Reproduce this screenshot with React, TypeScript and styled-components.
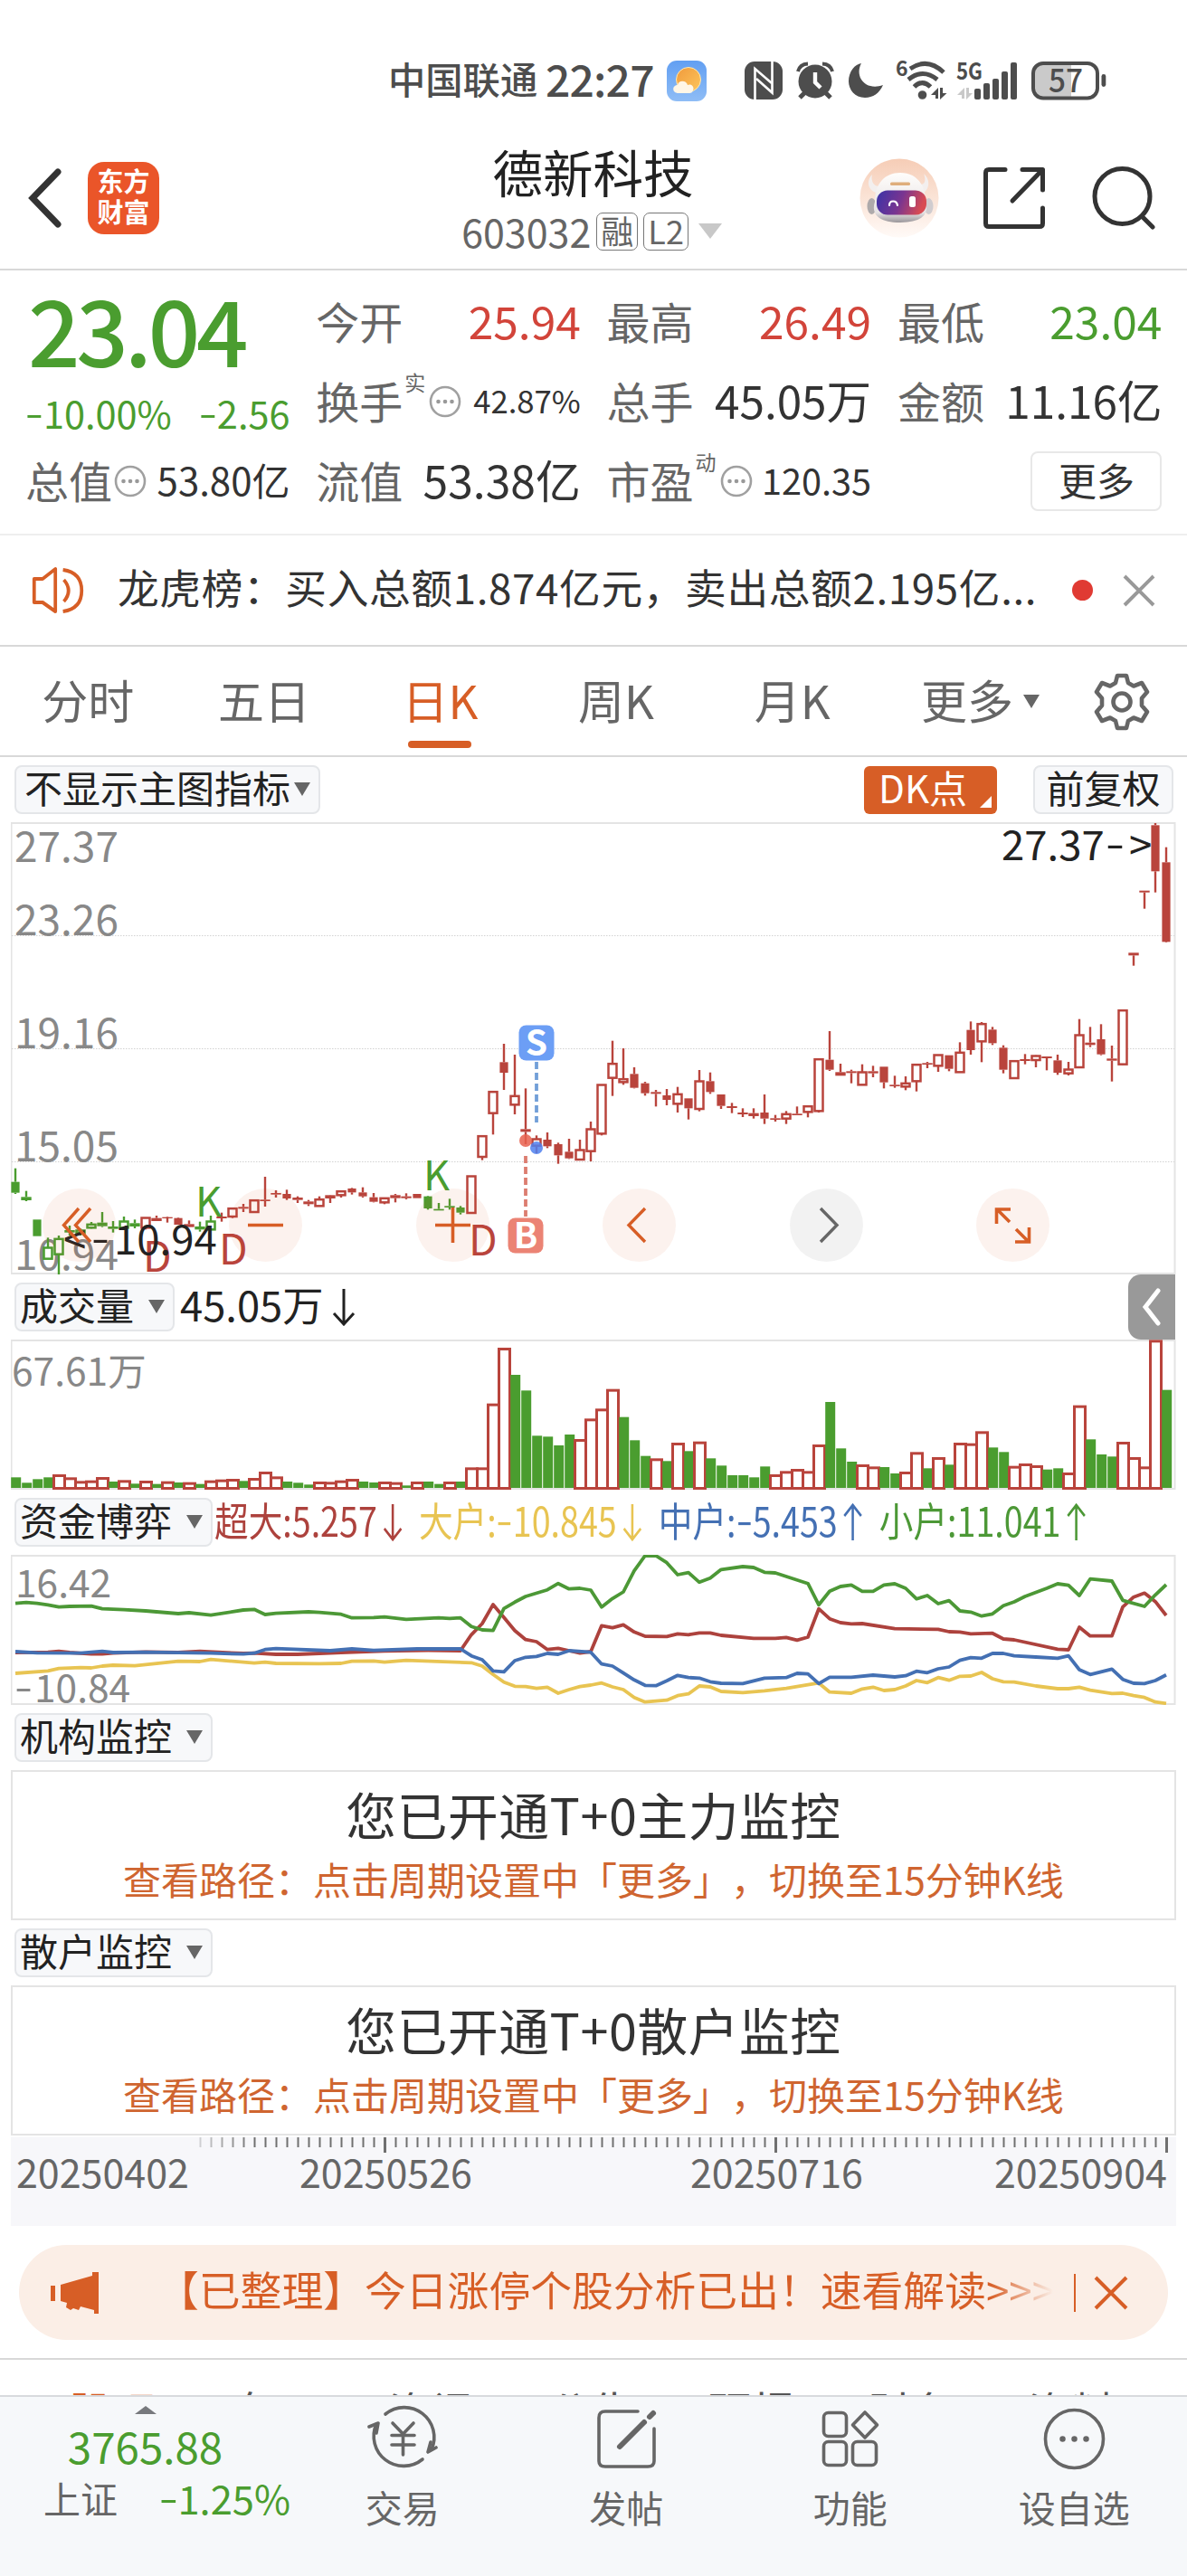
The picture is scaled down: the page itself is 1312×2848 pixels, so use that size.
import React from "react";
import styled, { createGlobalStyle } from "styled-components";

type Kind = "r" | "R" | "g" | "G";

// [wick top, body top, body bottom, wick bottom, kind]
// lower case kinds are filled, upper case kinds are hollow
type Candle = [number, number, number, number, Kind];
type Point = [number, number];

const RED = "#b9443c";
const GREEN = "#4a9d2f";
const BLUE = "#4470b3";
const YELLOW = "#e8c452";
const ORANGE = "#d75e26";

const FONT = '"Noto Sans CJK SC", "Noto Sans", sans-serif';

const candles: Candle[] = [
  [1175, 1220, 1256, 1260, "g"],
  [1250, 1270, 1281, 1284, "g"],
  [1345, 1345, 1400, 1400, "g"],
  [1405, 1437, 1475, 1475, "G"],
  [1398, 1408, 1460, 1527, "G"],
  [1365, 1380, 1388, 1398, "g"],
  [1375, 1380, 1390, 1398, "G"],
  [1353, 1360, 1372, 1375, "G"],
  [1320, 1355, 1367, 1370, "g"],
  [1350, 1368, 1376, 1388, "g"],
  [1335, 1350, 1372, 1378, "G"],
  [1345, 1357, 1368, 1374, "g"],
  [1338, 1338, 1372, 1378, "R"],
  [1332, 1340, 1350, 1350, "r"],
  [1335, 1337, 1341, 1355, "r"],
  [1338, 1340, 1362, 1362, "r"],
  [1348, 1360, 1370, 1370, "r"],
  [1352, 1368, 1378, 1385, "g"],
  [1332, 1350, 1378, 1380, "G"],
  [1322, 1335, 1341, 1352, "r"],
  [1307, 1307, 1335, 1340, "R"],
  [1293, 1303, 1309, 1320, "r"],
  [1280, 1280, 1320, 1320, "R"],
  [1203, 1279, 1284, 1302, "r"],
  [1248, 1257, 1262, 1272, "r"],
  [1246, 1260, 1275, 1280, "r"],
  [1268, 1272, 1280, 1290, "r"],
  [1280, 1285, 1294, 1300, "r"],
  [1268, 1277, 1300, 1300, "R"],
  [1263, 1264, 1275, 1290, "r"],
  [1248, 1250, 1264, 1272, "R"],
  [1240, 1242, 1255, 1262, "r"],
  [1238, 1255, 1268, 1272, "r"],
  [1257, 1271, 1286, 1288, "r"],
  [1272, 1273, 1288, 1294, "R"],
  [1260, 1264, 1274, 1288, "r"],
  [1258, 1268, 1274, 1278, "r"],
  [1260, 1260, 1274, 1274, "r"],
  [1266, 1268, 1308, 1312, "g"],
  [1290, 1310, 1315, 1315, "g"],
  [1276, 1300, 1305, 1312, "g"],
  [1300, 1305, 1322, 1328, "g"],
  [1200, 1200, 1323, 1325, "R"],
  [1067, 1067, 1137, 1148, "R"],
  [920, 920, 992, 1063, "R"],
  [762, 823, 858, 915, "r"],
  [798, 934, 964, 996, "R"],
  [910, 1045, 1054, 1095, "r"],
  [1066, 1077, 1100, 1125, "R"],
  [1056, 1080, 1102, 1108, "r"],
  [1090, 1095, 1132, 1160, "r"],
  [1077, 1120, 1142, 1144, "r"],
  [1080, 1113, 1146, 1148, "R"],
  [1020, 1044, 1118, 1152, "R"],
  [897, 897, 1060, 1066, "R"],
  [752, 827, 875, 935, "R"],
  [777, 878, 889, 898, "R"],
  [840, 862, 908, 910, "r"],
  [888, 893, 926, 934, "r"],
  [915, 922, 928, 970, "r"],
  [912, 933, 948, 966, "r"],
  [905, 928, 961, 990, "R"],
  [943, 943, 976, 1013, "r"],
  [849, 885, 978, 986, "R"],
  [857, 886, 922, 928, "r"],
  [930, 930, 968, 978, "r"],
  [958, 969, 975, 992, "r"],
  [976, 990, 996, 1005, "r"],
  [976, 992, 1002, 1010, "r"],
  [930, 990, 1010, 1028, "r"],
  [998, 1009, 1014, 1020, "r"],
  [985, 994, 1010, 1028, "R"],
  [970, 994, 999, 999, "r"],
  [968, 968, 988, 1006, "R"],
  [812, 812, 985, 990, "R"],
  [720, 815, 848, 852, "r"],
  [828, 856, 868, 868, "r"],
  [848, 853, 859, 893, "r"],
  [830, 855, 898, 898, "R"],
  [835, 853, 860, 873, "r"],
  [838, 838, 890, 910, "r"],
  [868, 898, 903, 908, "r"],
  [870, 892, 904, 916, "R"],
  [828, 830, 886, 920, "R"],
  [822, 826, 831, 843, "r"],
  [798, 798, 835, 855, "R"],
  [800, 800, 845, 853, "r"],
  [757, 790, 856, 856, "R"],
  [688, 716, 783, 798, "r"],
  [690, 695, 754, 823, "R"],
  [706, 715, 760, 766, "r"],
  [767, 775, 848, 860, "r"],
  [818, 818, 876, 876, "R"],
  [796, 813, 819, 830, "r"],
  [800, 801, 816, 840, "R"],
  [804, 804, 810, 850, "r"],
  [798, 817, 858, 865, "r"],
  [822, 846, 860, 867, "R"],
  [680, 732, 840, 840, "R"],
  [706, 758, 766, 773, "r"],
  [697, 747, 797, 800, "r"],
  [768, 811, 818, 887, "r"],
  [650, 650, 830, 832, "R"],
  [460, 460, 469, 503, "r"],
  [254, 254, 260, 314, "r"],
  [30, 37, 190, 260, "r"],
  [110, 160, 424, 426, "r"],
];

const volumes =
  "700g 718g 706g 700g 693R 703R 715R 713R 702R 714g 712R 721g 714R 722g 716R 717g 719R 722g 713R 710R 708R 712g 705R 684R 700R 714g 718g 724g 717R 718R 713R 708R 714g 717g 717R 719R 727g 717R 714g 722g 717R 714g 670R 670R 458R 273R 360g 412g 562g 565g 594g 558g 576R 508R 475R 410R 500g 577g 629g 640R 646g 588R 613g 584R 637g 661g 693g 693g 700g 664g 693R 682R 675R 682R 594R 450g 604g 648g 660R 667R 666g 687g 684R 619R 670g 636R 658g 588R 590R 550R 601g 616g 665R 657R 663R 674g 670g 687R 464R 574g 624g 631g 585R 636R 667R 247R 410g"
    .split(" ")
    .map((v) => ({ top: parseInt(v, 10), up: v.endsWith("R") }));

const smallLine: Point[] = [
  [0, 1118], [1, 1115], [2, 1118], [3, 1123], [4, 1130], [5, 1128], [7, 1127], [8, 1136], [10, 1139],
  [12, 1143], [15, 1152], [16, 1149], [18, 1157], [21, 1140], [22, 1138], [23, 1155], [24, 1151],
  [27, 1146], [28, 1148], [30, 1154], [31, 1166], [33, 1165], [34, 1163], [36, 1171], [39, 1166],
  [40, 1168], [41, 1166], [42, 1195], [43, 1206], [44, 1208], [45, 1135], [46, 1114], [47, 1095],
  [49, 1073], [50, 1052], [51, 1070], [52, 1068], [53, 1074], [54, 1130], [55, 1102], [56, 1080],
  [57, 1010], [58, 960], [59, 960], [60, 983], [61, 1023], [62, 1016], [63, 1048], [64, 1034],
  [65, 1006], [67, 996], [68, 999], [69, 1015], [70, 1017], [73, 1052], [74, 1123], [75, 1078],
  [76, 1062], [77, 1057], [78, 1078], [79, 1078], [80, 1057], [81, 1053], [82, 1068], [83, 1103],
  [84, 1092], [85, 1119], [86, 1109], [87, 1143], [88, 1147], [89, 1160], [90, 1153], [91, 1126],
  [92, 1113], [93, 1095], [95, 1068], [96, 1053], [97, 1058], [98, 1092], [99, 1037], [101, 1044],
  [102, 1108], [104, 1128], [105, 1090], [106, 1056],
];

const superLine: Point[] = [
  [0, 1281], [3, 1280], [4, 1277], [5, 1281], [7, 1286], [8, 1286], [9, 1283], [12, 1279], [15, 1281],
  [17, 1277], [21, 1284], [22, 1283], [24, 1287], [26, 1287], [30, 1281], [34, 1276], [38, 1274],
  [41, 1275], [42, 1222], [43, 1185], [44, 1122], [45, 1165], [46, 1208], [47, 1238], [48, 1245],
  [49, 1271], [50, 1267], [51, 1275], [52, 1283], [53, 1278], [54, 1192], [55, 1199], [56, 1189],
  [57, 1213], [58, 1227], [60, 1228], [61, 1219], [62, 1222], [63, 1216], [64, 1216], [65, 1224],
  [68, 1234], [70, 1234], [71, 1231], [72, 1240], [73, 1230], [74, 1136], [75, 1169], [76, 1182],
  [77, 1186], [78, 1185], [81, 1202], [85, 1204], [86, 1212], [87, 1213], [88, 1219], [90, 1217],
  [91, 1236], [92, 1239], [96, 1270], [97, 1272], [98, 1197], [99, 1226], [101, 1226], [102, 1130],
  [103, 1097], [104, 1084], [105, 1112], [106, 1158],
];

const middleLine: Point[] = [
  [0, 1278], [2, 1282], [6, 1283], [8, 1277], [9, 1281], [12, 1280], [18, 1283], [21, 1286], [22, 1283],
  [23, 1271], [24, 1268], [29, 1275], [31, 1269], [33, 1274], [37, 1269], [41, 1269], [42, 1292],
  [43, 1305], [44, 1342], [45, 1345], [46, 1308], [47, 1297], [48, 1294], [49, 1284], [50, 1287],
  [51, 1275], [53, 1280], [54, 1319], [55, 1326], [56, 1349], [57, 1372], [58, 1390], [59, 1391],
  [60, 1375], [61, 1357], [62, 1364], [63, 1366], [64, 1378], [65, 1383], [67, 1384], [69, 1366],
  [71, 1364], [72, 1350], [73, 1352], [74, 1384], [75, 1363], [77, 1363], [79, 1356], [81, 1362],
  [82, 1358], [83, 1343], [84, 1348], [85, 1335], [86, 1329], [87, 1307], [88, 1298], [89, 1300],
  [90, 1284], [91, 1284], [92, 1292], [94, 1296], [96, 1300], [97, 1292], [98, 1338], [99, 1354],
  [101, 1336], [102, 1370], [103, 1383], [104, 1384], [105, 1374], [106, 1355],
];

const bigLine: Point[] = [
  [0, 1350], [3, 1342], [4, 1334], [6, 1331], [7, 1332], [8, 1326], [9, 1323], [11, 1325], [15, 1310],
  [17, 1311], [18, 1304], [22, 1316], [23, 1313], [24, 1317], [28, 1318], [30, 1317], [31, 1310],
  [33, 1309], [34, 1313], [36, 1307], [42, 1315], [43, 1326], [44, 1354], [45, 1379], [46, 1393],
  [47, 1394], [48, 1400], [49, 1396], [50, 1416], [51, 1404], [52, 1394], [53, 1389], [54, 1382],
  [55, 1395], [56, 1404], [57, 1430], [58, 1445], [60, 1439], [61, 1424], [62, 1418], [63, 1392],
  [64, 1395], [65, 1410], [67, 1414], [69, 1408], [71, 1400], [73, 1388], [74, 1382], [75, 1412],
  [77, 1416], [78, 1402], [79, 1396], [80, 1407], [81, 1404], [82, 1392], [83, 1374], [84, 1381],
  [85, 1364], [86, 1373], [87, 1360], [88, 1359], [89, 1347], [90, 1368], [91, 1378], [92, 1379],
  [94, 1392], [96, 1401], [97, 1401], [98, 1396], [99, 1406], [101, 1417], [102, 1416], [103, 1424],
  [104, 1430], [105, 1445], [106, 1450],
];

// every chart shares the same day axis
const dayX = (i: number) => 17 + i * 12;
// chart values are stored in thirds of a pixel from the chart's origin
const valueY = (v: number, origin: number) => origin + v / 3;

const linePoints = (line: Point[]) =>
  line.map(([i, v]) => `${dayX(i)},${valueY(v, 1400).toFixed(1)}`).join(" ");

function StatusIcons() {
  return (
    <svg width="404" height="48" viewBox="820 65 404 48">
      <rect x="823" y="68" width="42" height="42" rx="11" fill="#4d4d4d" />
      <path d="M834.500 110V76L853 92" fill="none" stroke="#fff" strokeWidth="2.600" />
      <path d="M853.500 68V102.500L836 87" fill="none" stroke="#fff" strokeWidth="2.600" />
      <circle cx="901" cy="90" r="18.500" fill="#4d4d4d" />
      <path d="M882 79Q884 71 893 70.500M909 70.500Q918 71 920 79" fill="none" stroke="#4d4d4d" strokeWidth="4" />
      <path d="M890 102L884 108M912 102L918 108" stroke="#4d4d4d" strokeWidth="5" />
      <path d="M901 80V91L907 97" fill="none" stroke="#fff" strokeWidth="4.400" />
      <path d="M952 70C944 85 957 101 976 94C972 103 965 108 956 108C945 108 938 99 938 90C938 79 945 71 952 70Z" fill="#4d4d4d" />
      <text x="990" y="84" fontFamily={FONT} fontWeight="700" fontSize="23" fill="#4d4d4d">6</text>
      <g fill="none" stroke="#4d4d4d" strokeWidth="5">
        <path d="M1006 76Q1025 63 1043 80" />
        <path d="M1004 88Q1020 75 1036 88" />
        <path d="M1010.500 96Q1019.500 87 1028.500 96" />
      </g>
      <circle cx="1019.500" cy="105" r="4.800" fill="#4d4d4d" />
      <path d="M1029 105L1037 97V109H1034V105ZM1039 97H1042V103H1046.500L1039 110Z" fill="#4d4d4d" />
      <text x="1057" y="88" fontFamily={FONT} fontWeight="700" fontSize="26" textLength="29" lengthAdjust="spacingAndGlyphs" fill="#4d4d4d">5G</text>
      <path d="M1058 105L1066 97V109H1063V105ZM1068 97H1071V103H1075L1068 110Z" fill="#c9c9c9" />
      <g fill="#4d4d4d">
        <rect x="1077" y="98" width="7" height="12" rx="2" />
        <rect x="1087" y="92" width="7" height="18" rx="2" />
        <rect x="1097" y="87" width="7" height="23" rx="2" />
        <rect x="1107" y="79" width="7" height="31" rx="2" />
        <rect x="1117" y="69" width="7" height="41" rx="2" />
      </g>
      <path d="M1154 70H1184V108H1154Q1142 108 1142 97V81Q1142 70 1154 70Z" fill="#cacaca" />
      <rect x="1142" y="70" width="71" height="38.500" rx="11" fill="none" stroke="#4d4d4d" strokeWidth="4" />
      <rect x="1217.500" y="82" width="4.800" height="14" rx="2.400" fill="#4d4d4d" />
      <text x="1178" y="102" textAnchor="middle" fontFamily={FONT} fontWeight="500" fontSize="36" textLength="38" lengthAdjust="spacingAndGlyphs" fill="#4d4d4d">57</text>
    </svg>
  );
}

function WeatherIcon() {
  return (
    <svg width="44" height="45" viewBox="0 0 44 45">
      <defs>
        <linearGradient id="sky" x1="0" y1="0" x2="0" y2="1">
          <stop offset="0" stopColor="#629ff2" />
          <stop offset="1" stopColor="#8fbdf6" />
        </linearGradient>
        <linearGradient id="sun" x1="0" y1="0" x2="1" y2="1">
          <stop offset="0" stopColor="#f09a3c" />
          <stop offset="1" stopColor="#fdc65c" />
        </linearGradient>
      </defs>
      <rect width="44" height="45" rx="11" fill="url(#sky)" />
      <circle cx="24" cy="21" r="13.500" fill="url(#sun)" stroke="#ffe9b0" strokeWidth="1" />
      <path d="M13 36C5 36 6 27 12 27C13 21 22 22 23 27C27 25 31 29 29 33C28 36 26 36 24 36Z" fill="#fff6e6" />
    </svg>
  );
}

function RobotIcon() {
  return (
    <svg width="88" height="88" viewBox="0 0 88 88">
      <defs>
        <linearGradient id="halo" x1="0" y1="0" x2="0" y2="1">
          <stop offset="0" stopColor="#f6cdb6" />
          <stop offset="1" stopColor="#fffaf7" />
        </linearGradient>
        <linearGradient id="visor" x1="0" y1="0" x2="1" y2="0.200">
          <stop offset="0" stopColor="#3a33a8" />
          <stop offset="0.550" stopColor="#7a3590" />
          <stop offset="1" stopColor="#d84b53" />
        </linearGradient>
        <linearGradient id="shell" x1="0" y1="0" x2="0" y2="1">
          <stop offset="0" stopColor="#fffdfb" />
          <stop offset="0.800" stopColor="#e6e3e4" />
          <stop offset="1" stopColor="#9a969a" />
        </linearGradient>
      </defs>
      <circle cx="44" cy="44" r="43.500" fill="url(#halo)" />
      <ellipse cx="13.500" cy="53" rx="5" ry="9" fill="#aeaaab" />
      <ellipse cx="76.500" cy="53" rx="5" ry="9" fill="#d0cccf" />
      <path d="M23 30C17 33 12 26 14 18C8 24 8 34 18 38ZM66 28C72 31 74 24 71 17C78 23 78 33 71 38Z" fill="#f3efee" />
      <path d="M17 48C17 28 28 16 45 16C62 16 73 28 73 48C77 60 71 71 45 71C19 71 13 60 17 48Z" fill="url(#shell)" />
      <rect x="34" y="26.500" width="22" height="3.500" rx="1.500" fill="#dfae7c" />
      <rect x="19" y="35.500" width="55" height="27" rx="12" fill="url(#visor)" />
      <path d="M33 52C33 46 41 46 42 52" fill="none" stroke="#fff" strokeWidth="2.200" strokeLinecap="round" />
      <rect x="55" y="42" width="7" height="12" rx="2.500" fill="#fff" />
    </svg>
  );
}

function DotsIcon() {
  return (
    <svg width="36" height="36" viewBox="0 0 36 36">
      <circle cx="18" cy="18" r="16" fill="none" stroke="#a0a0a0" strokeWidth="2.600" />
      <g fill="#999">
        <circle cx="10.500" cy="18" r="2.300" />
        <circle cx="18" cy="18" r="2.300" />
        <circle cx="25.500" cy="18" r="2.300" />
      </g>
    </svg>
  );
}

function ArrowIcon({ up }: { up?: boolean }) {
  return (
    <svg width="30" height="42" viewBox="0 0 30 42">
      <path
        d={up ? "M15 41V3M4 14L15 2L26 14" : "M15 1V39M4 28L15 40L26 28"}
        fill="none"
        stroke="currentColor"
        strokeWidth="3"
      />
    </svg>
  );
}

function Selector({ text, tight }: { text: string; tight?: boolean }) {
  return (
    <Pill $tight={tight}>
      {text}
      <Triangle />
    </Pill>
  );
}

function PriceChart() {
  return (
    <ChartSvg width="1288" height="500" viewBox="12 909 1288 500">
      <rect x="12.500" y="910" width="1286" height="498" fill="none" stroke="#e4e4e4" strokeWidth="2" />
      {[1034.5, 1159.5, 1284.5].map((y) => (
        <line key={y} x1="13" x2="1298" y1={y} y2={y} stroke="#d2d2d2" strokeDasharray="1.500 1.500" />
      ))}
      <g fontSize="46" fill="#888">
        <text x="16" y="953">27.37</text>
        <text x="16" y="1034">23.26</text>
        <text x="16" y="1159">19.16</text>
        <text x="16" y="1283.500">15.05</text>
        <text x="16" y="1404">10.94</text>
      </g>
      {candles.map(([high, top, bottom, low, kind], i) => {
        const color = kind.toLowerCase() === "g" ? GREEN : RED;
        const hollow = kind === "R" || kind === "G";
        const x = dayX(i);
        const thin = bottom - top < 13;
        const half = thin ? 5.7 : 4.6;
        return (
          <g key={i}>
            <line x1={x} x2={x} y1={valueY(high, 900)} y2={valueY(top, 900)} stroke={color} strokeWidth="2.400" />
            <line x1={x} x2={x} y1={valueY(bottom, 900)} y2={valueY(low, 900)} stroke={color} strokeWidth="2.400" />
            {hollow ? (
              <rect x={x - 4.5} y={valueY(top, 900) + 0.5} width="9" height={(bottom - top) / 3 - 0.5} fill="#fff" stroke={color} strokeWidth="2.500" />
            ) : (
              <rect x={x - half} y={valueY(top, 900)} width={half * 2} height={(bottom - top) / 3} fill={color} />
            )}
          </g>
        );
      })}
      <line x1="593" x2="593" y1="1174" y2="1241" stroke="#729fd8" strokeWidth="3.800" strokeDasharray="8 4" />
      <line x1="581" x2="581" y1="1278" y2="1345" stroke="#dc7d70" strokeWidth="3.800" strokeDasharray="8 4" />
      <circle cx="581" cy="1261" r="7" fill="#e8604e" fillOpacity="0.850" />
      <circle cx="593" cy="1269" r="7" fill="#4f80ee" fillOpacity="0.850" />
      <rect x="573.500" y="1133.500" width="39" height="39" rx="8" fill="#6c9ef5" />
      <rect x="561.500" y="1346.500" width="39" height="39" rx="8" fill="#eb8374" />
      <g fontSize="39" fontWeight="700" textAnchor="middle" fill="#fff">
        <text x="593" y="1167">S</text>
        <text x="581" y="1380">B</text>
      </g>
      <g fontSize="45" fill={GREEN}>
        <text x="216" y="1345">K</text>
        <text x="468" y="1316">K</text>
      </g>
      <g fontSize="46" fill={RED}>
        <text x="158" y="1405.500">D</text>
        <text x="242" y="1397.500">D</text>
        <text x="518" y="1388">D</text>
      </g>
      <g fontSize="45.500" fill="#222">
        <text x="70" y="1387">&lt;</text>
        <text x="101" y="1385" textLength="20" lengthAdjust="spacingAndGlyphs">-</text>
        <text x="126" y="1387">10.94</text>
        <text x="1107" y="951">27.37</text>
        <text x="1222" y="949" textLength="21" lengthAdjust="spacingAndGlyphs">-</text>
        <text x="1248" y="951">&gt;</text>
      </g>
    </ChartSvg>
  );
}

function VolumeChart() {
  return (
    <ChartSvg width="1288" height="166" viewBox="12 1481 1288 166">
      <rect x="12.500" y="1482" width="1286" height="164" fill="none" stroke="#e4e4e4" strokeWidth="2" />
      <text x="13" y="1531.500" fontSize="42.500" fill="#888">67.61万</text>
      {volumes.map(({ top, up }, i) =>
        up ? (
          <rect key={i} x={dayX(i) - 5.5} y={valueY(top, 1400) + 0.5} width="12" height={(735 - top) / 3} fill="#fff" stroke={RED} strokeWidth="3" />
        ) : (
          <rect key={i} x={dayX(i) - 4.8} y={valueY(top, 1400)} width="11" height={(735 - top) / 3} fill={GREEN} />
        )
      )}
    </ChartSvg>
  );
}

function FundsChart() {
  return (
    <ChartSvg width="1288" height="166" viewBox="12 1719 1288 166">
      <rect x="12.500" y="1720" width="1286" height="164" fill="none" stroke="#e4e4e4" strokeWidth="2" />
      <g fontSize="42.500" fill="#888">
        <text x="17" y="1765.500">16.42</text>
        <text x="16" y="1880" textLength="20" lengthAdjust="spacingAndGlyphs">-</text>
        <text x="38" y="1881.500">10.84</text>
      </g>
      <g fill="none" strokeWidth="3.800" strokeLinejoin="round">
        <polyline points={linePoints(bigLine)} stroke={YELLOW} />
        <polyline points={linePoints(superLine)} stroke="#ad423d" />
        <polyline points={linePoints(middleLine)} stroke={BLUE} />
        <polyline points={linePoints(smallLine)} stroke="#4c9836" />
      </g>
    </ChartSvg>
  );
}

function DateAxis() {
  const ticks = Array.from({ length: 90 }, (_, k) => k + 17);
  return (
    <AxisSvg width="1288" height="100" viewBox="12 2361 1288 100">
      <rect x="12" y="2361" width="1288" height="1.500" fill="#fff" />
      {ticks.map((i) => {
        const major = i === 34 || i === 70 || i === 106;
        return (
          <line
            key={i}
            x1={dayX(i) + 0.5}
            x2={dayX(i) + 0.5}
            y1="2363"
            y2={major ? 2380 : 2374}
            stroke="#707070"
            strokeWidth={major ? 3 : 2}
            opacity={Math.min(1, (i - 15) / 7)}
          />
        );
      })}
      <g fontSize="43" fill="#666">
        <text x="18" y="2418.500">20250402</text>
        <text x="331" y="2418.500">20250526</text>
        <text x="763" y="2418.500">20250716</text>
        <text x="1099" y="2418.500">20250904</text>
      </g>
    </AxisSvg>
  );
}

const tabs = ["分时", "五日", "日K", "周K", "月K"];
const sections = ["股吧", "盘口", "资讯", "公告", "研报", "财务", "资料"];

const chartButtons: { name: string; path: string; muted?: boolean; width: number }[] = [
  { name: "first", path: "M40 22L23.500 40.500L40 59M53 22L36.500 40.500L53 59", width: 3.4 },
  { name: "zoom-out", path: "M21 40.500H60", width: 3.6 },
  { name: "zoom-in", path: "M21 40.500H60M40.500 21V60", width: 3.6 },
  { name: "previous", path: "M47 22L29 40.500L47 59", width: 3.4 },
  { name: "next", path: "M34 22L52 40.500L34 59", muted: true, width: 3.4 },
  { name: "expand", path: "M22.500 39V23H38M23 23L37 37M58.500 43V59H43M58 59L44 45", width: 3.6 },
];

const navItems = [
  {
    name: "交易",
    icon: (
      <>
        <path d="M20 11A33 33 0 0 1 71 50M61 61A33 33 0 0 1 10 22" />
        <path d="M2 25L12 21L10 32M76 48L67 53L70 42" />
        <path d="M28 21L39.500 33L51 21M27 34.500H52M27 45H52M39.500 33V56" />
      </>
    ),
  },
  {
    name: "发帖",
    icon: (
      <>
        <path d="M52 8H16Q9 8 9 15V63Q9 69 16 69H63Q70 69 70 63V27" />
        <path d="M32 47L59 20" strokeWidth="6" />
        <path d="M65 14L69 10" strokeWidth="6" />
      </>
    ),
  },
  {
    name: "功能",
    icon: (
      <>
        <rect x="9.500" y="9.500" width="25" height="26" rx="5" />
        <rect x="9.500" y="41.500" width="25" height="26" rx="5" />
        <rect x="41.500" y="41.500" width="26" height="26" rx="5" />
        <path d="M55 9L68.500 23L55 37L41.500 23Z" />
      </>
    ),
  },
  {
    name: "设自选",
    icon: (
      <>
        <circle cx="39.500" cy="38.500" r="32" />
        <path d="M26.500 38.500h0.010M39.500 38.500h0.010M52.500 38.500h0.010" strokeWidth="6.500" />
      </>
    ),
  },
];

export default function App() {
  return (
    <Page>
      <GlobalStyle />
      <StatusBar>
        <Carrier>中国联通</Carrier>
        <Clock>22:27</Clock>
        <WeatherIcon />
        <StatusIcons />
      </StatusBar>

      <Header>
        <HeaderSide>
          <svg width="40" height="68" viewBox="0 0 40 68">
            <path d="M34 5L6 34L34 63" fill="none" stroke="#333" strokeWidth="7" strokeLinecap="round" />
          </svg>
          <Logo>
            <span>东方</span>
            <span>财富</span>
          </Logo>
        </HeaderSide>
        <StockTitle>
          <StockName>德新科技</StockName>
          <StockCode>
            603032
            <Tag>融</Tag>
            <Tag>L2</Tag>
            <CodeTriangle />
          </StockCode>
        </StockTitle>
        <HeaderActions>
          <RobotIcon />
          <svg width="70" height="70" viewBox="0 0 70 70">
            <g fill="none" stroke="#333" strokeWidth="5" strokeLinecap="round" strokeLinejoin="round">
              <path d="M25 3.500H7Q3.500 3.500 3.500 7V63Q3.500 66.500 7 66.500H63Q66.500 66.500 66.500 63V46" />
              <path d="M44 3.500H66.500V26M65 5L33 38" />
            </g>
          </svg>
          <svg width="72" height="72" viewBox="0 0 72 72">
            <circle cx="34.500" cy="34" r="30.500" fill="none" stroke="#333" strokeWidth="5" />
            <path d="M56 56L68 68" stroke="#333" strokeWidth="5" strokeLinecap="round" />
          </svg>
        </HeaderActions>
      </Header>

      <Quote>
        <PriceBlock>
          <Price>23.04</Price>
          <Change>
            <span>
              <Minus>-</Minus>10.00%
            </span>
            <span>
              <Minus>-</Minus>2.56
            </span>
          </Change>
        </PriceBlock>
        <Cell>
          <Label>今开</Label>
          <Value $color="#d2443a">25.94</Value>
        </Cell>
        <Cell>
          <Label>最高</Label>
          <Value $color="#d2443a">26.49</Value>
        </Cell>
        <Cell>
          <Label>最低</Label>
          <Value $color={GREEN}>23.04</Value>
        </Cell>
        <Cell>
          <Label>
            换手<Sup>实</Sup>
          </Label>
          <DotsIcon />
          <Value $size={34.7}>42.87%</Value>
        </Cell>
        <Cell>
          <Label>总手</Label>
          <Value $size={49.5}>45.05万</Value>
        </Cell>
        <Cell>
          <Label>金额</Label>
          <Value $size={49.5}>11.16亿</Value>
        </Cell>
        <Cell>
          <Label>总值</Label>
          <DotsIcon />
          <Value $size={42}>53.80亿</Value>
        </Cell>
        <Cell>
          <Label>流值</Label>
          <Value $size={49.8}>53.38亿</Value>
        </Cell>
        <Cell>
          <Label>
            市盈<Sup>动</Sup>
          </Label>
          <DotsIcon />
          <Value $size={39.7}>120.35</Value>
        </Cell>
        <Cell>
          <MoreButton>更多</MoreButton>
        </Cell>
      </Quote>

      <News>
        <svg width="60" height="56" viewBox="0 0 64 56" preserveAspectRatio="none">
          <g fill="none" stroke={ORANGE} strokeWidth="4" strokeLinejoin="round">
            <path d="M4 15H14L29 4V51L14 41H4Z" />
            <path d="M39 16Q50 28 39 40" />
            <path d="M38 5Q60 8 60 28Q60 48 38 51" />
          </g>
        </svg>
        <NewsText>龙虎榜：买入总额1.874亿元，卖出总额2.195亿...</NewsText>
        <NewsDot />
        <svg width="36" height="36" viewBox="0 0 36 36">
          <path d="M2 2L34 34M34 2L2 34" stroke="#999" strokeWidth="4" />
        </svg>
      </News>

      <Tabs>
        {tabs.map((tab) => (
          <Tab key={tab} $active={tab === "日K"}>
            {tab}
          </Tab>
        ))}
        <MoreTab>
          更多
          <Triangle />
        </MoreTab>
        <svg width="62" height="64" viewBox="0 0 62 64">
          <g fill="none" stroke="#666" strokeWidth="4.600" strokeLinejoin="round">
            <path d="M26 3H36L38 11L44 14.500L53 11L59 21L53 28V36L59 43L53 53L44 49.500L38 53L36 61H26L24 53L18 49.500L9 53L3 43L9 36V28L3 21L9 11L18 14.500L24 11Z" />
            <circle cx="31" cy="32" r="9.500" />
          </g>
        </svg>
      </Tabs>

      <ToolRow>
        <Selector text="不显示主图指标" tight />
        <DkButton>DK点</DkButton>
        <AdjustPill>前复权</AdjustPill>
      </ToolRow>
      <ChartBox>
        <PriceChart />
        <ChartButtons>
          {chartButtons.map(({ name, path, muted, width }) => (
            <ChartButton key={name} $muted={muted}>
              <svg width="81" height="81" viewBox="0 0 81 81">
                <path d={path} fill="none" stroke="currentColor" strokeWidth={width} />
              </svg>
            </ChartButton>
          ))}
        </ChartButtons>
      </ChartBox>

      <ToolRow>
        <Selector text="成交量" />
        <Reading>
          45.05万
          <ArrowIcon />
        </Reading>
        <CollapseTab>
          <svg width="24" height="44" viewBox="0 0 24 44">
            <path d="M19 4L5 22L19 40" fill="none" stroke="#fff" strokeWidth="5" strokeLinecap="round" />
          </svg>
        </CollapseTab>
      </ToolRow>
      <VolumeChart />

      <ToolRow>
        <Selector text="资金博弈" />
        <Legend>
          <LegendItem $color="#ad423d">
            <span>超大:5.257</span>
            <ArrowIcon />
          </LegendItem>
          <LegendItem $color={YELLOW}>
            <span>
              大户:<Minus>-</Minus>10.845
            </span>
            <ArrowIcon />
          </LegendItem>
          <LegendItem $color={BLUE}>
            <span>
              中户:<Minus>-</Minus>5.453
            </span>
            <ArrowIcon up />
          </LegendItem>
          <LegendItem $color="#4c9836">
            <span>小户:11.041</span>
            <ArrowIcon up />
          </LegendItem>
        </Legend>
      </ToolRow>
      <FundsChart />

      <ToolRow>
        <Selector text="机构监控" />
      </ToolRow>
      <Notice>
        <NoticeTitle>您已开通T+0主力监控</NoticeTitle>
        <NoticeHint>查看路径：点击周期设置中「更多」，切换至15分钟K线</NoticeHint>
      </Notice>
      <ToolRow>
        <Selector text="散户监控" />
      </ToolRow>
      <Notice>
        <NoticeTitle>您已开通T+0散户监控</NoticeTitle>
        <NoticeHint>查看路径：点击周期设置中「更多」，切换至15分钟K线</NoticeHint>
      </Notice>
      <DateAxis />

      <Banner>
        <svg width="54" height="48" viewBox="0 0 54 48">
          <path d="M0 16H5V33H0ZM11 15L46 5V1H53V47H48V43L33 39L31 43L25 41L22 43L17 40L18 35L11 33Z" fill={ORANGE} />
        </svg>
        <BannerText>【已整理】今日涨停个股分析已出！速看解读&gt;&gt;&gt;</BannerText>
        <BannerDivider />
        <svg width="38" height="38" viewBox="0 0 38 38">
          <path d="M2 2L36 36M36 2L2 36" stroke={ORANGE} strokeWidth="4" />
        </svg>
      </Banner>

      <Sections>
        {sections.map((name, i) => (
          <Section key={name} $active={i === 0}>
            {name}
          </Section>
        ))}
      </Sections>

      <BottomBar>
        <IndexBlock>
          <UpTriangle />
          <IndexValue>3765.88</IndexValue>
          <IndexRow>
            上证
            <IndexChange>
              <Minus>-</Minus>1.25%
            </IndexChange>
          </IndexRow>
        </IndexBlock>
        {navItems.map(({ name, icon }) => (
          <NavItem key={name}>
            <svg width="78" height="78" viewBox="0 0 78 78">
              <g fill="none" stroke="#666" strokeWidth="3.600" strokeLinecap="round" strokeLinejoin="round">
                {icon}
              </g>
            </svg>
            {name}
          </NavItem>
        ))}
      </BottomBar>
    </Page>
  );
}

const GlobalStyle = createGlobalStyle`
  * {
    box-sizing: border-box;
  }

  body {
    margin: 0;
    background: #fff;
    font-family: ${FONT};
    text-spacing-trim: space-all;
  }
`;

const Page = styled.main`
  display: flex;
  flex-direction: column;
  width: 1312px;
  height: 2848px;
  overflow: hidden;
  color: #333;
  line-height: 1;
  white-space: nowrap;

  svg {
    display: block;
    flex: none;
  }
`;

// a wider minus sign that sits at mid height of the digits
const Minus = styled.span`
  display: inline-block;
  width: 0.48em;
  text-align: center;
  transform: translateY(-0.05em) scaleX(1.4);
`;

const StatusBar = styled.div`
  display: flex;
  align-items: center;
  flex: none;
  height: 140px;
  padding: 38px 0 0 429px;
  color: #4d4d4d;

  > svg:last-child {
    margin-left: 39px;
  }
`;

const Carrier = styled.span`
  width: 174px;
  padding-bottom: 4px;
  font-size: 41.3px;
  font-weight: 500;
`;

const Clock = styled.span`
  width: 134px;
  padding-bottom: 6px;
  font-size: 48px;
  font-weight: 500;
  letter-spacing: -0.8px;
`;

const Header = styled.header`
  display: flex;
  align-items: center;
  justify-content: space-between;
  flex: none;
  height: 159px;
  padding: 0 34px 0 30px;
  border-bottom: 2px solid #d8d8d8;
`;

const HeaderSide = styled.div`
  display: flex;
  align-items: center;
  gap: 27px;
  width: 360px;
`;

const Logo = styled.div`
  display: flex;
  flex-direction: column;
  align-items: center;
  justify-content: center;
  gap: 5px;
  width: 79px;
  height: 80px;
  padding-bottom: 4px;
  border-radius: 18px;
  background: #ea5529;
  color: #fff;
  font-size: 29px;
  font-weight: 700;
`;

const StockTitle = styled.div`
  display: flex;
  flex-direction: column;
  align-items: center;
  gap: 17px;
  padding: 2px 0 0;
`;

const StockName = styled.h1`
  margin: 0 0 0 3px;
  color: #222;
  font-size: 55.5px;
  font-weight: 400;
`;

const StockCode = styled.div`
  display: flex;
  align-items: center;
  height: 42px;
  color: #666;
  font-size: 43px;
`;

const Tag = styled.span`
  display: flex;
  align-items: center;
  justify-content: center;
  min-width: 44px;
  height: 42px;
  margin-left: 6px;
  padding: 0 4px 3px;
  border: 1.5px solid #777;
  border-radius: 7px;
  font-size: 36px;
`;

const CodeTriangle = styled.i`
  margin-left: 11px;
  border: 13px solid transparent;
  border-top: 17px solid #c8c8c8;
  border-bottom: 0;
`;

const HeaderActions = styled.div`
  display: flex;
  align-items: center;
  justify-content: flex-end;
  gap: 48px;
  width: 360px;

  svg:last-child {
    margin-left: 2px;
  }
`;

const Quote = styled.section`
  display: grid;
  grid-template-columns: repeat(4, 292.5px);
  grid-template-rows: repeat(3, 88px);
  column-gap: 28.8px;
  flex: none;
  height: 293px;
  padding: 13px 0 0 28px;
  border-bottom: 2px solid #eee;
`;

const PriceBlock = styled.div`
  grid-row: span 2;
  color: ${GREEN};
`;

const Price = styled.div`
  margin: 0 0 23px 3px;
  font-size: 101px;
  font-weight: 500;
  letter-spacing: -4.2px;
`;

const Change = styled.div`
  display: flex;
  justify-content: space-between;
  font-size: 41.5px;
`;

const Cell = styled.div`
  display: flex;
  align-items: center;
`;

const Label = styled.span`
  margin-right: 2px;
  padding-bottom: 4px;
  color: #666;
  font-size: 48px;
`;

const Sup = styled.sup`
  display: inline-block;
  width: 27px;
  padding-left: 2px;
  font-size: 23px;
  line-height: 0;
  vertical-align: 31px;
`;

const Value = styled.span<{ $color?: string; $size?: number }>`
  margin-left: auto;
  padding-bottom: 4px;
  color: ${({ $color }) => $color || "#333"};
  font-size: ${({ $size }) => $size || 49.7}px;
`;

const MoreButton = styled.button`
  width: 145px;
  height: 66px;
  margin-left: auto;
  padding: 0 0 5px;
  border: 2px solid #e8e8e8;
  border-radius: 8px;
  background: #fff;
  color: #333;
  font: 400 42px ${FONT};
  line-height: 1;
`;

const News = styled.section`
  display: flex;
  align-items: center;
  flex: none;
  height: 123px;
  padding: 0 35px 0 34px;
  border-bottom: 2px solid #d8d8d8;
`;

const NewsText = styled.span`
  width: 1055px;
  padding: 0 0 7px 36px;
  font-size: 45.7px;
  letter-spacing: 0.65px;
`;

const NewsDot = styled.i`
  width: 23px;
  height: 23px;
  margin: 0 auto 0 36px;
  border-radius: 50%;
  background: #e03a33;
`;

const Tabs = styled.nav`
  display: flex;
  flex: none;
  height: 122px;
  border-bottom: 2px solid #d8d8d8;
  color: #666;
  font-size: 51px;

  > svg {
    margin: 29px 0 0 39px;
  }
`;

const Tab = styled.div<{ $active?: boolean }>`
  display: flex;
  flex-direction: column;
  align-items: center;
  width: 194.6px;
  padding-top: 33px;
  color: ${({ $active }) => ($active ? ORANGE : "inherit")};

  &::after {
    content: "";
    width: 70px;
    height: 8px;
    margin-top: 20px;
    border-radius: 4px;
    background: ${({ $active }) => ($active ? ORANGE : "transparent")};
  }
`;

const Triangle = styled.i`
  border: 9px solid transparent;
  border-top: 15px solid #666;
  border-bottom: 0;
`;

const MoreTab = styled.div`
  display: flex;
  width: 197px;
  padding: 33px 0 0 45px;

  ${Triangle} {
    margin: 20px 0 0 11px;
  }
`;

const ToolRow = styled.div`
  display: flex;
  align-items: center;
  flex: none;
  height: 72px;
  padding: 0 15px 0 16px;
`;

const Pill = styled.div<{ $tight?: boolean }>`
  display: flex;
  align-items: center;
  height: 54px;
  padding: 0 7px 7px ${({ $tight }) => ($tight ? 9 : 4)}px;
  border: 2px solid #e4e6e9;
  border-radius: 8px;
  background: #f7f8fa;
  color: #222;
  font-size: 42px;

  ${Triangle} {
    margin: 6px 2px 0 ${({ $tight }) => ($tight ? 4 : 16)}px;
  }
`;

const AdjustPill = styled(Pill)`
  justify-content: center;
  width: 155px;
  padding: 0 0 7px;
`;

const DkButton = styled.div`
  display: flex;
  align-items: flex-end;
  width: 147px;
  height: 53px;
  margin: 0 40px 0 auto;
  padding: 0 6px 7px 16px;
  border-radius: 6px;
  background: ${ORANGE};
  color: #fff;
  font-size: 42px;
  line-height: 46px;

  &::after {
    content: "";
    margin-left: auto;
    border-left: 13px solid transparent;
    border-bottom: 13px solid #fff;
  }
`;

const ChartSvg = styled.svg`
  margin-left: 12px;
  font-family: ${FONT};
`;

const AxisSvg = styled(ChartSvg)`
  background: #f7f7fa;
`;

const ChartBox = styled.div`
  position: relative;
`;

const ChartButtons = styled.div`
  position: absolute;
  bottom: 14px;
  left: 47px;
  display: flex;
  gap: 125.4px;
`;

const ChartButton = styled.div<{ $muted?: boolean }>`
  width: 81px;
  height: 81px;
  border-radius: 50%;
  background: ${({ $muted }) => ($muted ? "rgba(0, 0, 0, 0.05)" : "rgba(215, 94, 38, 0.08)")};
  color: ${({ $muted }) => ($muted ? "#666" : ORANGE)};
`;

const Reading = styled.div`
  display: flex;
  align-items: center;
  gap: 8px;
  margin-left: 6px;
  padding-bottom: 6px;
  color: #222;
  font-size: 45.3px;

  svg {
    margin-top: 6px;
  }
`;

const CollapseTab = styled.div`
  display: flex;
  align-items: center;
  justify-content: center;
  width: 52px;
  height: 72px;
  margin: 0 -2px 0 auto;
  border-radius: 14px 0 0 14px;
  background: #999;
`;

const Legend = styled.div`
  display: flex;
  gap: 19.5px;
  margin-left: 2px;
  padding-bottom: 6px;
  font-size: 44.5px;
  transform: scaleX(0.846);
  transform-origin: left;
`;

const LegendItem = styled.div<{ $color: string }>`
  display: flex;
  align-items: center;
  gap: 5px;
  color: ${({ $color }) => $color};

  svg {
    margin-top: 6px;
  }
`;

const Notice = styled.section`
  display: flex;
  flex-direction: column;
  align-items: center;
  gap: 23px;
  flex: none;
  height: 166px;
  margin: 0 12px;
  padding-top: 18px;
  border: 2px solid #e4e4e4;
  font-size: 42px;
`;

const NoticeTitle = styled.div`
  font-size: 55.7px;
  letter-spacing: 0.6px;
`;

const NoticeHint = styled.div`
  color: #cf6530;
`;

const Banner = styled.section`
  display: flex;
  align-items: center;
  flex: none;
  height: 105px;
  margin: 21px 21px 20px;
  padding: 0 44px 0 35px;
  border-radius: 53px;
  background: #fbeee6;
  color: ${ORANGE};
`;

const BannerText = styled.span`
  width: 1000px;
  margin-left: 64px;
  padding-bottom: 9px;
  font-size: 45.8px;
  line-height: 56px;
  background: linear-gradient(90deg, ${ORANGE} 92%, rgba(215, 94, 38, 0) 99%);
  background-clip: text;
  -webkit-background-clip: text;
  color: transparent;
`;

const BannerDivider = styled.i`
  width: 2px;
  height: 42px;
  margin: 0 auto 0 13px;
  background: ${ORANGE};
`;

const Sections = styled.nav`
  display: flex;
  flex: none;
  height: 41px;
  padding: 31px 0 0 76px;
  border-top: 2px solid #d8d8d8;
  overflow: hidden;
`;

const Section = styled.span<{ $active?: boolean }>`
  flex: none;
  width: 176.7px;
  color: ${({ $active }) => ($active ? ORANGE : "#555")};
  font-size: 48px;
`;

const BottomBar = styled.footer`
  display: flex;
  flex: none;
  height: 200px;
  border-top: 2px solid #d8dadd;
  background: #f6f8fa;
  color: #666;
  font-size: 41px;
`;

const IndexBlock = styled.div`
  display: flex;
  flex-direction: column;
  align-items: center;
  width: 321px;
`;

const UpTriangle = styled.i`
  margin-top: 10px;
  border: 12px solid transparent;
  border-top: 0;
  border-bottom: 9px solid #77797d;
`;

const IndexValue = styled.div`
  margin-top: 11px;
  color: ${GREEN};
  font-size: 47.5px;
`;

const IndexRow = styled.div`
  display: flex;
  align-items: center;
  align-self: flex-end;
  justify-content: space-between;
  width: 273px;
  margin-top: 12px;
`;

const IndexChange = styled.span`
  color: ${GREEN};
  font-size: 43.5px;
`;

const NavItem = styled.div`
  display: flex;
  flex-direction: column;
  align-items: center;
  width: 247.5px;
  padding-top: 8px;

  svg {
    margin-bottom: 15px;
  }
`;
